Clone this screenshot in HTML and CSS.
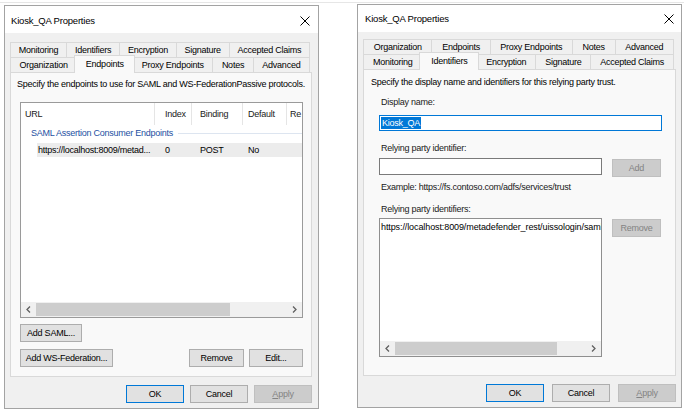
FILE: index.html
```html
<!DOCTYPE html>
<html lang="en">
<head>
    <meta charset="UTF-8">
    <title>Kiosk_QA Properties</title>
    <link rel="stylesheet" href="styles.css">
</head>
<body>
<div class="screen">

    <!-- Endpoints page -->
    <div class="dialog dlg-endpoints">
        <div class="titlebar">
            <span class="title">Kiosk_QA Properties</span>
            <svg class="close" width="10" height="10" viewBox="0 0 10 10"><path d="M0.5 0.5L9.5 9.5M9.5 0.5L0.5 9.5" stroke="#000" stroke-width="1"/></svg>
        </div>
        <div class="dlg-body">
            <div class="tabs">
                <div class="tabrow">
                    <span class="tab">Monitoring</span>
                    <span class="tab">Identifiers</span>
                    <span class="tab">Encryption</span>
                    <span class="tab">Signature</span>
                    <span class="tab">Accepted Claims</span>
                </div>
                <div class="tabrow">
                    <span class="tab">Organization</span>
                    <span class="tab active">Endpoints</span>
                    <span class="tab">Proxy Endpoints</span>
                    <span class="tab">Notes</span>
                    <span class="tab">Advanced</span>
                </div>
            </div>
            <div class="panel">
                <div class="ep-intro">Specify the endpoints to use for SAML and WS-FederationPassive protocols.</div>
                <div class="listview">
                    <div class="lv-head">
                        <span class="c1">URL</span>
                        <span class="c2">Index</span>
                        <span class="c3">Binding</span>
                        <span class="c4">Default</span>
                        <span class="c5">Re</span>
                    </div>
                    <div class="lv-group">
                        <span>SAML Assertion Consumer Endpoints</span>
                        <i class="lv-group-line"></i>
                    </div>
                    <div class="lv-row">
                        <span class="c1">https://localhost:8009/metad...</span>
                        <span class="c2">0</span>
                        <span class="c3">POST</span>
                        <span class="c4">No</span>
                        <span class="c5"></span>
                    </div>
                    <div class="fill"></div>
                    <div class="hscroll">
                        <span class="arrow"><svg width="5" height="7" viewBox="0 0 5 7"><path d="M4 0.5L1 3.5L4 6.5" fill="none" stroke="#606060" stroke-width="1.3"/></svg></span>
                        <span class="track"><span class="thumb thumb-ep"></span></span>
                        <span class="arrow"><svg width="5" height="7" viewBox="0 0 5 7"><path d="M1 0.5L4 3.5L1 6.5" fill="none" stroke="#606060" stroke-width="1.3"/></svg></span>
                    </div>
                </div>
                <div class="ep-buttons">
                    <button class="btn w-saml">Add SAML...</button>
                </div>
                <div class="ep-buttons second">
                    <button class="btn w-wsfed">Add WS-Federation...</button>
                    <span class="fill"></span>
                    <button class="btn w-remove">Remove</button>
                    <button class="btn w-edit">Edit...</button>
                </div>
            </div>
            <div class="footer">
                <button class="btn default">OK</button>
                <button class="btn">Cancel</button>
                <button class="btn disabled"><u>A</u>pply</button>
            </div>
        </div>
    </div>

    <!-- Identifiers page -->
    <div class="dialog dlg-identifiers">
        <div class="titlebar">
            <span class="title">Kiosk_QA Properties</span>
            <svg class="close" width="10" height="10" viewBox="0 0 10 10"><path d="M0.5 0.5L9.5 9.5M9.5 0.5L0.5 9.5" stroke="#000" stroke-width="1"/></svg>
        </div>
        <div class="dlg-body">
            <div class="tabs">
                <div class="tabrow">
                    <span class="tab">Organization</span>
                    <span class="tab">Endpoints</span>
                    <span class="tab">Proxy Endpoints</span>
                    <span class="tab">Notes</span>
                    <span class="tab">Advanced</span>
                </div>
                <div class="tabrow">
                    <span class="tab">Monitoring</span>
                    <span class="tab active">Identifiers</span>
                    <span class="tab">Encryption</span>
                    <span class="tab">Signature</span>
                    <span class="tab">Accepted Claims</span>
                </div>
            </div>
            <div class="panel">
                <div class="id-intro">Specify the display name and identifiers for this relying party trust.</div>
                <div class="id-form">
                    <div class="label first">Display name:</div>
                    <div class="textbox focused"><span class="sel">Kiosk_QA</span></div>
                    <div class="label">Relying party identifier:</div>
                    <div class="id-row">
                        <div class="textbox narrow"></div>
                        <button class="btn disabled side">Add</button>
                    </div>
                    <div class="label example">Example: https://fs.contoso.com/adfs/services/trust</div>
                    <div class="label tight">Relying party identifiers:</div>
                    <div class="id-row list-row">
                        <div class="listbox">
                            <div class="lb-item">https://localhost:8009/metadefender_rest/uissologin/saml</div>
                            <div class="fill"></div>
                            <div class="hscroll">
                                <span class="arrow"><svg width="5" height="7" viewBox="0 0 5 7"><path d="M4 0.5L1 3.5L4 6.5" fill="none" stroke="#606060" stroke-width="1.3"/></svg></span>
                                <span class="track"><span class="thumb thumb-id"></span></span>
                                <span class="arrow"><svg width="5" height="7" viewBox="0 0 5 7"><path d="M1 0.5L4 3.5L1 6.5" fill="none" stroke="#606060" stroke-width="1.3"/></svg></span>
                            </div>
                        </div>
                        <button class="btn disabled side">Remove</button>
                    </div>
                </div>
            </div>
            <div class="footer wide">
                <button class="btn default">OK</button>
                <button class="btn">Cancel</button>
                <button class="btn disabled"><u>A</u>pply</button>
            </div>
        </div>
    </div>

</div>
</body>
</html>
```

FILE: styles.css
```css
* {
    box-sizing: border-box;
}
body {
    margin: 0;
    background: #fff;
    font-family: "Liberation Sans", Arial, sans-serif;
    font-size: 9px;
    letter-spacing: -0.25px;
    color: #000;
}
.screen {
    margin-top: 2px;
    border-top: 1px solid #e6e6e6;
    height: 411px;
    display: flex;
    align-items: flex-start;
}
.dialog {
    display: flex;
    flex-direction: column;
    background: #f0f0f0;
    border: 1px solid #a3a3a3;
}
.dlg-endpoints {
    width: 315px;
    height: 404px;
    margin: 2px 0 0 4px;
}
.dlg-identifiers {
    width: 325px;
    height: 404px;
    margin: 1px 0 0 38px;
}

/* title bar */
.titlebar {
    height: 27px;
    background: #fff;
    display: flex;
    align-items: center;
    justify-content: space-between;
    padding: 2px 8px 0 6px;
}
.dlg-identifiers .titlebar {
    padding: 0 7px 0 7px;
}
.title {
    font-size: 9.5px;
    letter-spacing: -0.2px;
}

.dlg-body {
    flex: 1;
    display: flex;
    flex-direction: column;
    padding: 9px 6px 0 5px;
}
.dlg-identifiers .dlg-body {
    padding: 7px 5px 0 5px;
}

/* tabs */
.tabs {
    padding-right: 2px;
}
.tabrow {
    display: flex;
    height: 15px;
}
.tab {
    flex: 1 1 auto;
    height: 15px;
    line-height: 14px;
    text-align: center;
    padding: 0 4px;
    white-space: nowrap;
    border: 1px solid #d9d9d9;
    border-bottom: none;
    margin-left: -1px;
    background: #f0f0f0;
}
.tab:first-child {
    margin-left: 0;
}
.tab.active {
    position: relative;
    z-index: 1;
    height: 18px;
    margin: -2px -2px 0 -3px;
    padding: 1px 6px 0;
    background: #f9f9f9;
}

/* tab page */
.panel {
    flex: 1;
    display: flex;
    flex-direction: column;
    background: #f9f9f9;
    border: 1px solid #d9d9d9;
}
.ep-intro {
    margin: 5px 0 0 6px;
    line-height: 12px;
}

.listview {
    margin: 12px 8px 0 9px;
    height: 216px;
    background: #fff;
    border: 1px solid #9a9a9a;
    display: flex;
    flex-direction: column;
}
.lv-head,
.lv-row {
    display: grid;
    grid-template-columns: 134px 37px 51px 44px 1fr;
    white-space: nowrap;
}
.lv-head {
    height: 22px;
    line-height: 22px;
    color: #1a1a1a;
}
.lv-head span {
    border-right: 1px solid #e5e5e5;
    overflow: hidden;
}
.lv-head span:last-child {
    border-right: none;
}
.c1 { padding-left: 4px; }
.c2 { padding-left: 10px; }
.c3 { padding-left: 8px; }
.c4 { padding-left: 5px; }
.c5 { padding-left: 3px; }

.lv-group {
    display: flex;
    align-items: center;
    height: 15px;
    padding: 1px 0 0 10px;
    color: #1e50a2;
    white-space: nowrap;
}
.lv-group-line {
    flex: 1;
    height: 1px;
    margin-left: 5px;
    background: #dde5f0;
}
.lv-row {
    grid-template-columns: 118px 37px 51px 44px 1fr;
    margin: 3px 0 0 16px;
    height: 14px;
    line-height: 14px;
    background: #ececec;
}
.lv-row .c1 {
    padding-left: 1px;
}
.fill {
    flex: 1;
}

.hscroll {
    display: flex;
    height: 15px;
    background: #f0f0f0;
}
.arrow {
    width: 15px;
    display: flex;
    align-items: center;
    justify-content: center;
}
.track {
    flex: 1;
    display: flex;
    align-items: stretch;
    padding: 1px 0;
}
.thumb {
    background: #cdcdcd;
}
.thumb-ep {
    width: 194px;
}
.thumb-id {
    width: 162px;
}

/* buttons */
.btn {
    height: 18px;
    padding: 0;
    font: inherit;
    letter-spacing: inherit;
    color: #000;
    background: #e1e1e1;
    border: 1px solid #adadad;
    border-radius: 0;
}
.btn.default {
    border-color: #0078d7;
}
.btn.disabled {
    color: #838383;
    background: #cccccc;
    border-color: #bfbfbf;
}
.ep-buttons {
    display: flex;
    gap: 5px;
    margin: 6px 8px 0 9px;
}
.ep-buttons.second {
    margin-top: 7px;
}
.w-saml { width: 62px; }
.w-wsfed { width: 93px; }
.w-remove { width: 55px; }
.w-edit { width: 54px; }

.footer {
    height: 31px;
    display: flex;
    justify-content: flex-end;
    gap: 6px;
    padding-top: 8px;
}
.footer.wide {
    gap: 8px;
}
.footer .btn {
    width: 58px;
}

/* identifiers page */
.id-intro {
    margin: 6px 0 0 7px;
    line-height: 12px;
}
.id-form {
    margin: 0 13px 0 15px;
    display: flex;
    flex-direction: column;
}
.label {
    line-height: 12px;
    margin: 11px 0 0 2px;
    color: #1a1a1a;
}
.label.first {
    margin-top: 8px;
}
.label.example {
    margin-top: 4px;
}
.label.tight {
    margin-top: 10px;
}
.textbox {
    height: 17px;
    background: #fff;
    border: 1px solid #7a7a7a;
}
.textbox.focused {
    margin-top: 7px;
    height: 16px;
    border-color: #0078d7;
    padding: 1px 0 0 1px;
}
.sel {
    display: inline-block;
    line-height: 12px;
    padding: 0 1px;
    background: #0078d7;
    color: #fff;
}
.id-row {
    display: flex;
    align-items: flex-start;
    margin-top: 4px;
}
.id-row.list-row {
    margin-top: 3px;
}
.textbox.narrow {
    width: 223px;
}
.btn.side {
    width: 49px;
    margin: 1px 0 0 10px;
}
.listbox {
    width: 223px;
    height: 139px;
    background: #fff;
    border: 1px solid #8f8f8f;
    display: flex;
    flex-direction: column;
}
.lb-item {
    padding: 2px 0 0 1px;
    line-height: 12px;
    letter-spacing: -0.1px;
    white-space: nowrap;
    overflow: hidden;
}
```
